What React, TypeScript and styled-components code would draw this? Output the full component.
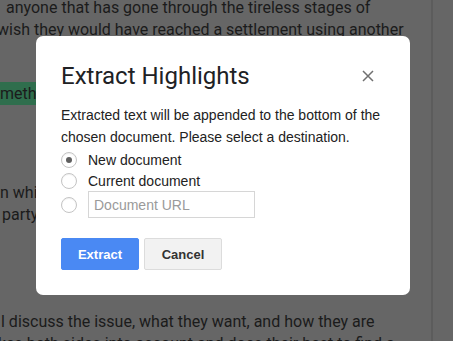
import React from "react";
import styled, { createGlobalStyle } from "styled-components";

const Global = createGlobalStyle`
  html, body { margin: 0; padding: 0; }
  body { width: 453px; height: 341px; overflow: hidden; background: #666666; }
  * { box-sizing: border-box; }
`;

const Page = styled.div`
  display: flex;
  width: 453px;
  height: 341px;
  overflow: hidden;
  background: #666666;
`;

const DocColumn = styled.div`
  width: 431px;
  flex: none;
  overflow: hidden;
  font-family: Roboto, "Noto Sans", sans-serif;
  font-size: 16px;
  color: #1b1b1b;
`;

const Divider = styled.div`
  width: 2px;
  flex: none;
  background: #5c5c5c;
`;

const Paragraph = styled.div<{ $gap: number }>`
  margin-top: ${(p) => p.$gap}px;
`;

const Line = styled.div<{ $indent: number }>`
  height: 22px;
  line-height: 22px;
  white-space: nowrap;
  text-indent: ${(p) => p.$indent}px;
`;

const Highlight = styled.span`
  background: #2f6e4d;
  padding: 2px 0;
`;

const Dialog = styled.div`
  position: fixed;
  left: 36px;
  top: 36px;
  width: 374px;
  height: 259px;
  background: #ffffff;
  border-radius: 7px;
  padding: 22px 25px 25px;
  display: flex;
  flex-direction: column;
  font-family: "Liberation Sans", Arial, sans-serif;
`;

const Header = styled.div`
  display: flex;
  align-items: center;
  justify-content: space-between;
  height: 36px;
`;

const Title = styled.h2`
  margin: 0;
  font-family: Roboto, "Noto Sans", sans-serif;
  font-weight: 400;
  font-size: 24px;
  color: #202124;
`;

const CloseButton = styled.button`
  border: none;
  background: none;
  padding: 0;
  margin-right: 11px;
  width: 12px;
  height: 12px;
  display: flex;
  cursor: pointer;
`;

const Description = styled.p`
  margin: 11px 0 0;
  font-size: 14px;
  line-height: 21.5px;
  color: #222222;
`;

const Options = styled.div`
  display: flex;
  flex-direction: column;
  margin-top: 1px;
`;

const OptionRow = styled.label<{ $height: number }>`
  display: flex;
  align-items: center;
  gap: 11px;
  height: ${(p) => p.$height}px;
  font-size: 14px;
  color: #222222;
`;

const Radio = styled.span<{ $checked?: boolean }>`
  width: 16px;
  height: 16px;
  flex: none;
  border-radius: 50%;
  border: 1px solid #c4c4c4;
  background: #ffffff;
  box-shadow: inset 0 1px 1px rgba(0, 0, 0, 0.06);
  display: flex;
  align-items: center;
  justify-content: center;
  &::after {
    content: "";
    width: 6px;
    height: 6px;
    border-radius: 50%;
    background: ${(p) => (p.$checked ? "#5f5f5f" : "transparent")};
  }
`;

const UrlInput = styled.input`
  width: 167px;
  height: 27px;
  border: 1px solid #d6d6d6;
  padding: 0 5px;
  font-family: "Liberation Sans", Arial, sans-serif;
  font-size: 14px;
  color: #222222;
  outline: none;
  &::placeholder {
    color: #9a9a9a;
  }
`;

const Actions = styled.div`
  display: flex;
  gap: 5px;
  margin-top: auto;
`;

const Button = styled.button<{ $primary?: boolean }>`
  width: 78px;
  height: 32px;
  border-radius: 2px;
  border: 1px solid ${(p) => (p.$primary ? "#4a89f3" : "#dcdcdc")};
  background: ${(p) => (p.$primary ? "#4a89f3" : "#f2f2f2")};
  color: ${(p) => (p.$primary ? "#ffffff" : "#333333")};
  font-family: "Liberation Sans", Arial, sans-serif;
  font-weight: 700;
  font-size: 13px;
  cursor: pointer;
`;

export default function App() {
  return (
    <>
      <Global />
      <Page>
        <DocColumn>
          <Paragraph $gap={-3}>
            <Line $indent={6}>anyone that has gone through the tireless stages of</Line>
            <Line $indent={-3}>wish they would have reached a settlement using another</Line>
          </Paragraph>
          <Paragraph $gap={42}>
            <Line $indent={0}>
              <Highlight>method that saves time, money, and stress for everyone</Highlight>
            </Line>
          </Paragraph>
          <Paragraph $gap={77}>
            <Line $indent={0}>n which a neutral third party helps the two sides</Line>
            <Line $indent={2}>party to reach an agreement that works for everyone</Line>
          </Paragraph>
          <Paragraph $gap={85}>
            <Line $indent={1}>l discuss the issue, what they want, and how they are</Line>
            <Line $indent={-2}>kes both sides into account and does their best to find a</Line>
          </Paragraph>
        </DocColumn>
        <Divider />
        <Dialog role="dialog" aria-label="Extract Highlights">
          <Header>
            <Title>Extract Highlights</Title>
            <CloseButton aria-label="Close">
              <svg width="12" height="12" viewBox="0 0 12 12">
                <path d="M1 1 L11 11 M11 1 L1 11" stroke="#707070" strokeWidth="1.5" />
              </svg>
            </CloseButton>
          </Header>
          <Description>
            Extracted text will be appended to the bottom of the chosen document. Please select a destination.
          </Description>
          <Options>
            <OptionRow $height={21}>
              <Radio $checked />
              New document
            </OptionRow>
            <OptionRow $height={21}>
              <Radio />
              Current document
            </OptionRow>
            <OptionRow $height={27}>
              <Radio />
              <UrlInput placeholder="Document URL" />
            </OptionRow>
          </Options>
          <Actions>
            <Button $primary>Extract</Button>
            <Button>Cancel</Button>
          </Actions>
        </Dialog>
      </Page>
    </>
  );
}
